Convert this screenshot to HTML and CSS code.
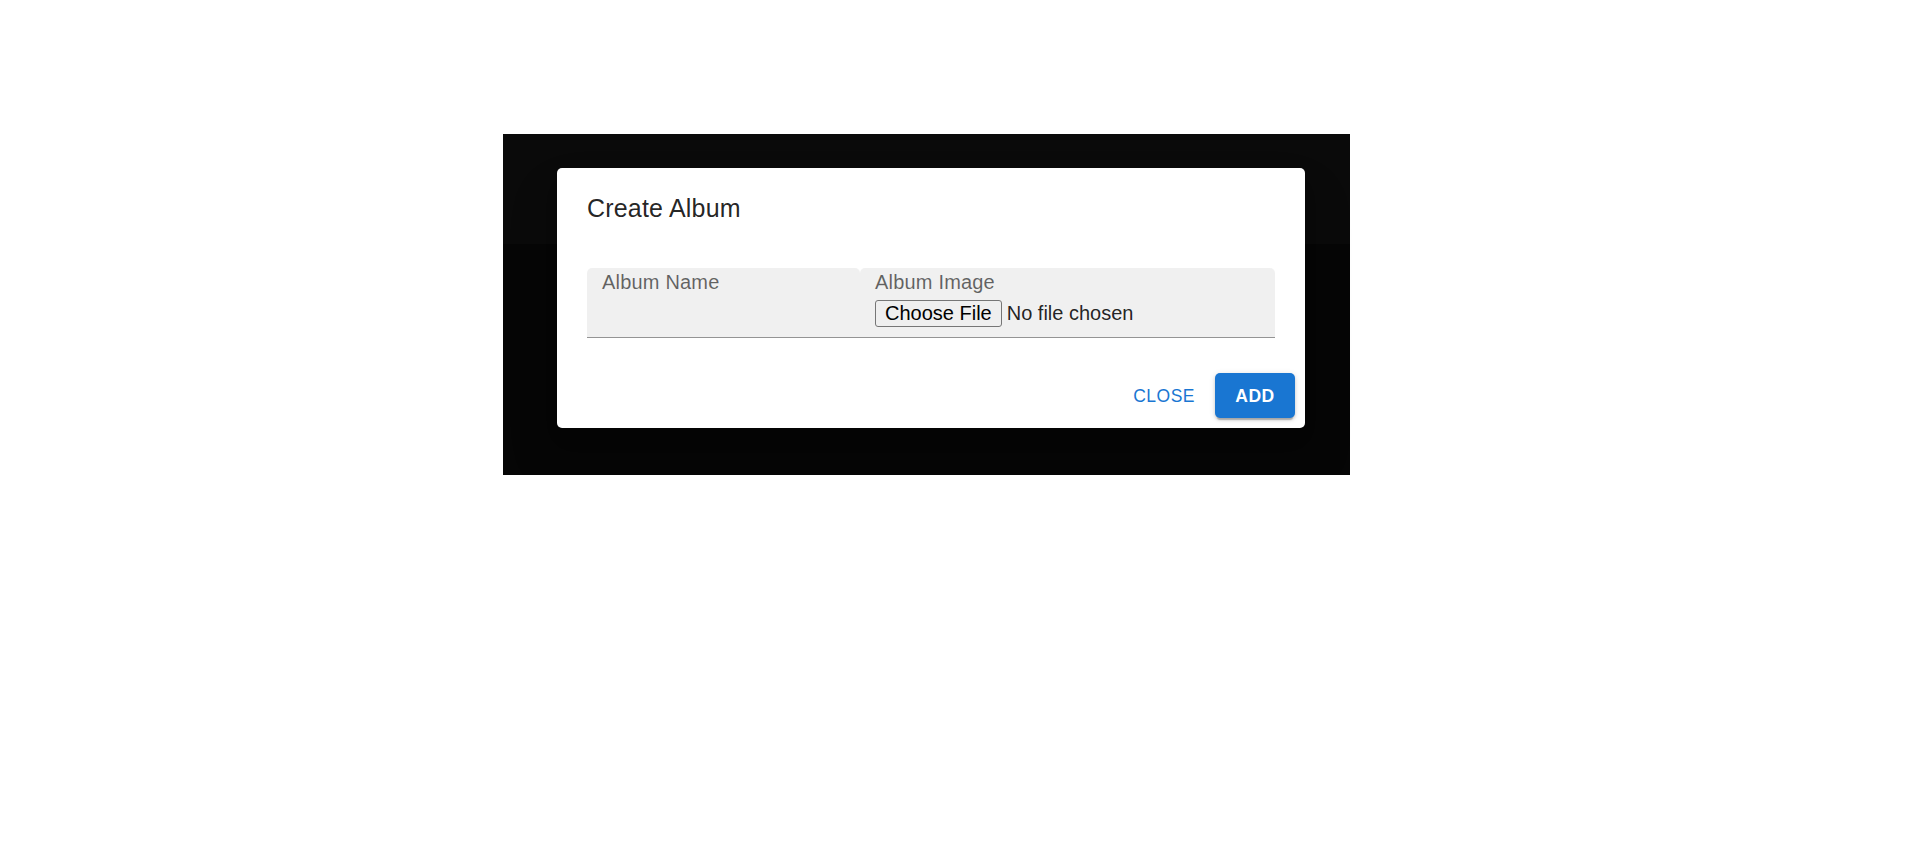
FILE: index.html
```html
<!DOCTYPE html>
<html lang="en">
<head>
<meta charset="utf-8">
<title>Create Album</title>
<link rel="stylesheet" href="styles.css">
</head>
<body>
<div class="stage">
  <div class="dialog" role="dialog" aria-labelledby="dlg-title">
    <h2 class="dialog-title" id="dlg-title">Create Album</h2>
    <div class="dialog-content">
      <div class="fields">
        <div class="field field-name">
          <label class="field-label">Album Name</label>
        </div>
        <div class="field field-image">
          <label class="field-label">Album Image</label>
          <div class="file-row">
            <button class="file-btn" type="button">Choose File</button>
            <span class="file-status">No file chosen</span>
          </div>
        </div>
      </div>
    </div>
    <div class="dialog-actions">
      <button class="btn btn-text" type="button">Close</button>
      <button class="btn btn-contained" type="button">Add</button>
    </div>
  </div>
</div>
</body>
</html>
```
FILE: styles.css
```css
html, body {
  margin: 0;
  padding: 0;
  background: #ffffff;
  font-family: "Liberation Sans", Arial, Helvetica, sans-serif;
}

.stage {
  box-sizing: border-box;
  width: 847px;
  height: 341px;
  margin: 134px 0 0 503px;
  padding: 34px 45px 47px 54px;
  background: linear-gradient(to bottom, #0a0a0a 0, #0a0a0a 110px, #060606 110px, #060606 100%);
}

.dialog {
  width: 748px;
  background: #ffffff;
  border-radius: 5px;
  box-shadow: 0 14px 19px -9px rgba(0,0,0,0.2), 0 30px 48px 4px rgba(0,0,0,0.14);
  color: rgba(0,0,0,0.87);
}

.dialog-title {
  margin: 0;
  padding: 20px 30px;
  font-size: 25px;
  font-weight: 400;
  line-height: 40px;
  letter-spacing: 0.19px;
  color: rgba(0,0,0,0.87);
}

.dialog-content {
  padding: 20px 30px 25px;
}

.fields {
  display: flex;
  height: 69px;
  border-bottom: 1px solid rgba(0,0,0,0.42);
}

.field {
  box-sizing: border-box;
  height: 100%;
  padding: 2px 15px 0;
  background: rgba(0,0,0,0.06);
  border-radius: 5px 5px 0 0;
}

.field-name {
  width: 273px;
}

.field-image {
  flex: 1;
}

.field-label {
  display: block;
  font-size: 20px;
  line-height: 24px;
  letter-spacing: 0.19px;
  color: rgba(0,0,0,0.6);
}

.file-row {
  display: flex;
  align-items: center;
  margin-top: 6px;
}

.file-btn {
  font-family: "Liberation Sans", Arial, sans-serif;
  font-size: 20px;
  line-height: 23px;
  padding: 1px 9px;
  margin: 0;
  border: 1px solid #767676;
  border-radius: 3px;
  background: #efefef;
  color: #000000;
}

.file-status {
  margin-left: 5px;
  font-size: 20px;
  line-height: 23px;
  color: rgba(0,0,0,0.87);
}

.dialog-actions {
  display: flex;
  justify-content: flex-end;
  gap: 10px;
  padding: 10px;
}

.btn {
  min-width: 80px;
  box-sizing: border-box;
  font-family: "Liberation Sans", Arial, sans-serif;
  font-size: 17.5px;
  font-weight: 500;
  line-height: 30px;
  letter-spacing: 0.5px;
  text-transform: uppercase;
  border: 0;
  border-radius: 5px;
  cursor: pointer;
}

.btn-text {
  padding: 7.5px 10px;
  background: transparent;
  color: #1976d2;
}

.btn-contained {
  padding: 7.5px 20px;
  background: #1976d2;
  color: #ffffff;
  font-weight: 700;
  box-shadow: 0 4px 1px -2px rgba(0,0,0,0.2), 0 2px 3px 0 rgba(0,0,0,0.14), 0 1px 6px 0 rgba(0,0,0,0.12);
}
```
